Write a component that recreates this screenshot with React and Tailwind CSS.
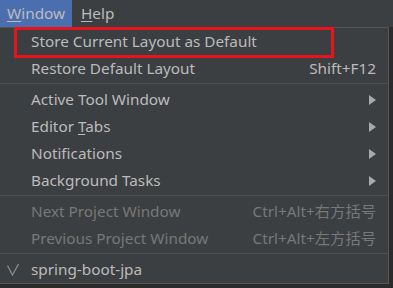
const font = { fontFamily: '"Noto Sans", "Noto Sans CJK SC", sans-serif' };

function Arrow() {
  return (
    <svg width="7" height="10" viewBox="0 0 7 10" className="fill-[#a9a9a9]">
      <path d="M0 0 L7 5 L0 10 Z" />
    </svg>
  );
}

function Item({ label, shortcut, disabled, sub, check, underline }) {
  const color = disabled ? "text-[#787878]" : "text-[#bbbbbb]";
  return (
    <div className={`flex h-[27px] items-center ${color}`}>
      <div className="flex w-[31px] pl-[7px]">
        {check && (
          <svg width="13" height="12" viewBox="0 0 13 12" fill="none" stroke="#8a8a8a" strokeWidth="1.3">
            <path d="M0.5 1.5 L5.5 11 L11.5 0" />
          </svg>
        )}
      </div>
      <div className="flex-1">
        {underline != null ? (
          <>
            {label.slice(0, underline)}
            <span className="underline underline-offset-2">{label[underline]}</span>
            {label.slice(underline + 1)}
          </>
        ) : (
          label
        )}
      </div>
      {shortcut && <div className="pr-[12px]">{shortcut}</div>}
      {sub && (
        <div className="pr-[12px]">
          <Arrow />
        </div>
      )}
    </div>
  );
}

function Sep() {
  return <div className="mt-[1px] mb-[2px] h-px bg-[#515151]" />;
}

export default function App() {
  return (
    <div className="h-[288px] w-[393px] overflow-hidden bg-[#2b2b2b] text-[15.3px]" style={font}>
      <div className="flex h-[27px] bg-[#3c3f41] text-[#bbbbbb]">
        <div className="flex items-center bg-[#4b6eaf] px-[7px]">
          <span className="underline underline-offset-2">W</span>indow
        </div>
        <div className="flex items-center px-[9px]">
          <span className="underline underline-offset-2">H</span>elp
        </div>
      </div>
      <div className="relative w-[389px] border-r border-b border-t border-[#555555] bg-[#3c3f41]">
        <div className="absolute left-[14px] top-[-1px] h-[31px] w-[320px] border-[3px] border-[#e8141c]" />
        <Item label="Store Current Layout as Default" />
        <Item label="Restore Default Layout" shortcut="Shift+F12" />
        <Sep />
        <Item label="Active Tool Window" sub />
        <Item label="Editor Tabs" sub underline={7} />
        <Item label="Notifications" sub />
        <Item label="Background Tasks" sub />
        <Sep />
        <Item label="Next Project Window" shortcut="Ctrl+Alt+右方括号" disabled />
        <Item label="Previous Project Window" shortcut="Ctrl+Alt+左方括号" disabled />
        <Sep />
        <Item label="spring-boot-jpa" check />
      </div>
    </div>
  );
}
